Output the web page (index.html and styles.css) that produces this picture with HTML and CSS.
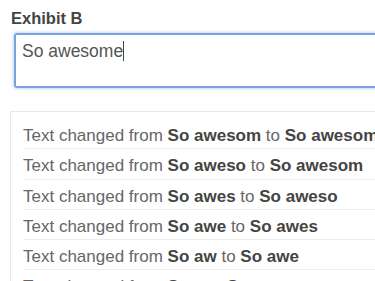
FILE: index.html
```html
<!DOCTYPE html>
<html>
<head>
<meta charset="utf-8">
<link rel="stylesheet" href="styles.css">
</head>
<body>
<div class="page">
  <label class="label">Exhibit B</label>
  <div class="textarea"><span class="value">So awesome</span><span class="caret"></span></div>
  <ul class="log">
    <li>Text changed from <b>So awesom</b> to <b>So awesome</b></li>
    <li>Text changed from <b>So aweso</b> to <b>So awesom</b></li>
    <li>Text changed from <b>So awes</b> to <b>So aweso</b></li>
    <li>Text changed from <b>So awe</b> to <b>So awes</b></li>
    <li>Text changed from <b>So aw</b> to <b>So awe</b></li>
    <li>Text changed from <b>So a</b> to <b>So aw</b></li>
  </ul>
</div>
</body>
</html>
```

FILE: styles.css
```css
html, body {
  margin: 0;
  padding: 0;
  background: #fff;
  overflow: hidden;
}
.page {
  width: 375px;
  height: 281px;
  overflow: hidden;
  font-family: "Liberation Sans", Arial, sans-serif;
  color: #666;
  padding: 9px 0 0 11px;
  box-sizing: border-box;
}
.label {
  display: block;
  font-size: 16.5px;
  font-weight: bold;
  color: #444;
  line-height: 18px;
}
.textarea {
  margin: 6px 0 0 3px;
  width: 420px;
  height: 55px;
  box-sizing: border-box;
  border: 2px solid #7aa3dc;
  border-radius: 3px;
  box-shadow: 0 0 3px 1px #c6d9f1;
  padding: 6px 6px;
  font-size: 17.5px;
  line-height: 20px;
  color: #555;
}
.caret {
  display: inline-block;
  width: 1px;
  height: 20px;
  background: #444;
  vertical-align: -4px;
}
.log {
  list-style: none;
  margin: 23px 0 0 -1px;
  padding: 7px 0 0 12px;
  width: 430px;
  border: 1px solid #e8e8e8;
  font-size: 17px;
  white-space: nowrap;
}
.log li {
  line-height: 20px;
  padding: 7px 0 2.25px 0;
  border-bottom: 1px solid #ececec;
}
.log b {
  color: #444;
}
```
